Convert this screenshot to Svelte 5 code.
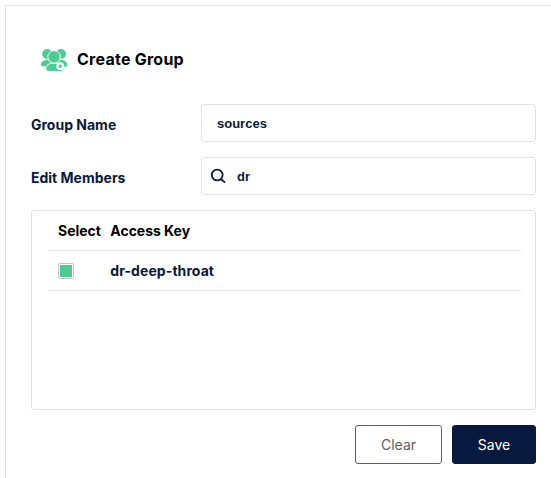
<script>
  let groupName = $state('sources');
  let query = $state('dr');
  let members = $state([{ key: 'dr-deep-throat', selected: true }]);

  function clear() {
    groupName = '';
    query = '';
    members.forEach((m) => (m.selected = false));
  }
</script>

<main class="panel">
  <header>
    <svg class="group-icon" width="27" height="23" viewBox="0 0 27 23" aria-hidden="true">
      <g fill="#4ccb92">
        <circle cx="6.200" cy="5" r="5" />
        <circle cx="20" cy="5" r="5" />
        <path d="M0 15.200C0 12.900 3 11 6.800 11H10V15L5 17.300H1.500C.5 17.300 0 16.300 0 15.200Z" />
        <path d="M26.200 15.200C26.200 12.900 23.200 11 19.400 11H16V15L21 17.800H24.700C25.700 17.800 26.200 16.600 26.200 15.200Z" />
      </g>
      <g fill="#4ccb92" stroke="#fff" stroke-width="1">
        <path d="M4.800 19.500C4.800 16.300 8 14 13.100 14S22.800 16.300 22.800 19.500C22.800 21.500 21.600 22.500 19.900 22.500H7.700C6 22.500 4.800 21.500 4.800 19.500Z" />
        <circle cx="13.100" cy="7.900" r="6.300" />
      </g>
      <circle cx="19.300" cy="17.200" r="3.900" fill="#fff" />
      <circle cx="19.300" cy="17.200" r="1.700" fill="#4ccb92" />
    </svg>
    <h1>Create Group</h1>
  </header>

  <div class="field">
    <label for="name">Group Name</label>
    <div class="control"><input id="name" bind:value={groupName} /></div>
  </div>
  <div class="field">
    <label for="search">Edit Members</label>
    <div class="control search">
      <svg width="16" height="16" viewBox="0 0 16 16" fill="none" stroke="#081c42" stroke-width="1.800" aria-hidden="true">
        <circle cx="7.200" cy="7" r="5.400" />
        <path d="M11 11L15 14.700" />
      </svg>
      <input id="search" bind:value={query} />
    </div>
  </div>

  <section class="members">
    <div class="row head"><span>Select</span><span>Access Key</span></div>
    {#each members as member}
      <label class="row">
        <span><input type="checkbox" bind:checked={member.selected} /></span>
        <span>{member.key}</span>
      </label>
    {/each}
  </section>

  <footer>
    <button class="clear" onclick={clear}>Clear</button>
    <button class="save">Save</button>
  </footer>
</main>

<style>
  :global(body) {
    background: #fff;
    overflow: hidden;
  }
  :global(#app) {
    padding-top: 5px;
  }
  .panel {
    box-sizing: border-box;
    margin-left: 5px;
    height: 473px;
    border: solid #e2e2e2;
    border-width: 1px 0 0 1px;
    border-top-left-radius: 2px;
    padding: 40px 15px 0 25px;
    font-family: Inter, sans-serif;
    color: #07193e;
  }
  header {
    display: flex;
    align-items: center;
    height: 26px;
    margin-bottom: 32px;
  }
  .group-icon {
    margin: 2px 9px 0 10px;
  }
  h1 {
    margin: 0;
    font-size: 16px;
    font-weight: 700;
    letter-spacing: 0.25px;
    color: #000;
  }
  .field {
    display: flex;
    align-items: center;
    margin-bottom: 15px;
  }
  .field label {
    width: 170px;
    padding-top: 3px;
    font-size: 14px;
    font-weight: 700;
  }
  .control {
    box-sizing: border-box;
    flex: 1;
    height: 38px;
    display: flex;
    align-items: center;
    border: 1px solid #e2e2e2;
    border-radius: 3px;
    padding: 0 15px;
  }
  .search {
    padding-left: 8px;
    gap: 11px;
  }
  .control input {
    flex: 1;
    min-width: 0;
    border: 0;
    outline: 0;
    padding: 0;
    background: none;
    font: bold 13px "Liberation Sans", sans-serif;
    color: #07193e;
  }
  .members {
    box-sizing: border-box;
    height: 200px;
    border: 1px solid #e2e2e2;
    border-radius: 3px;
    padding: 0 14px 0 16px;
    font-size: 14px;
    font-weight: 700;
  }
  .row {
    box-sizing: border-box;
    height: 40px;
    display: grid;
    grid-template-columns: 52.300px 1fr;
    align-items: center;
    padding-left: 10px;
    border-bottom: 1px solid #e2e2e2;
    letter-spacing: 0.08px;
  }
  .row span {
    display: flex;
    white-space: nowrap;
  }
  .head {
    letter-spacing: -0.02px;
    color: #000;
  }
  .row input {
    appearance: none;
    box-sizing: border-box;
    width: 16px;
    height: 16px;
    margin: 0;
    border: 1px solid #c3c3c3;
    border-radius: 2px;
    padding: 1px;
    background: #fff;
  }
  .row input:checked {
    background: #4ccb92 content-box;
  }
  footer {
    display: flex;
    justify-content: flex-end;
    gap: 10px;
    margin-top: 15px;
  }
  button {
    height: 39px;
    padding: 0;
    border-radius: 3px;
    font: 400 14px Inter, sans-serif;
  }
  .clear {
    width: 87px;
    border: 1px solid #5e5e5e;
    background: #fff;
    color: #5e5e5e;
  }
  .save {
    width: 84px;
    border: 1px solid #07193e;
    background: #07193e;
    color: #fff;
  }
</style>
